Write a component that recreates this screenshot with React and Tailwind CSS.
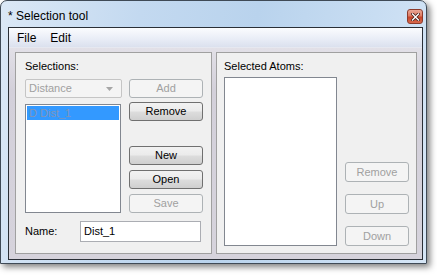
import React from 'react';

const Btn = ({ children, disabled, className = '' }) => (
  <div
    className={`flex items-center justify-center rounded-[3px] border text-[11px] leading-none ${
      disabled
        ? 'border-[#adb2b5] bg-[#f4f4f4] text-[#a0a0a0]'
        : 'border-[#707070] bg-[linear-gradient(#f2f2f2_0%,#ebebeb_48%,#dddddd_52%,#cfcfcf_100%)] text-black'
    } ${className}`}
  >
    {children}
  </div>
);

const CloseButton = () => (
  <div className="mt-[8px] flex h-[15px] w-[16px] items-center justify-center rounded-[3px] border border-[#8c3b2c] bg-[linear-gradient(#eba897_0%,#dc7a62_45%,#c7452a_55%,#d8694c_100%)]">
    <svg width="9" height="8" viewBox="0 0 9 8">
      <path d="M1.5 1 L7.5 7 M7.5 1 L1.5 7" stroke="#4a2018" strokeWidth="3" strokeLinecap="square" />
      <path d="M1.5 1 L7.5 7 M7.5 1 L1.5 7" stroke="#ffffff" strokeWidth="1.4" strokeLinecap="square" />
    </svg>
  </div>
);

export default function App() {
  return (
    <div className="relative h-[276px] w-[437px] overflow-hidden bg-white font-['Liberation_Sans',Arial,sans-serif]">
      <div className="flex h-[264px] w-[427px] flex-col rounded-t-[7px] border border-[#3f4a56] bg-[linear-gradient(100deg,#dbe8f6_0%,#c3d9f0_30%,#b9d3ed_55%,#c8ddf2_80%,#d6e6f6_100%)] pr-[3px] pb-[3px] pl-[7px] shadow-[3px_3px_6px_rgba(0,0,0,0.5)]">
        {/* title bar */}
        <div className="flex h-[26px] items-start justify-between">
          <div className="pt-[8px] text-[12px] leading-[14px] text-black">* Selection tool</div>
          <CloseButton />
        </div>

        {/* client area */}
        <div className="flex flex-1 flex-col border border-[#2a2f36] bg-[#d5d2db]">
          <div className="flex h-[20px] items-center gap-[14px] border-b border-[#e6e8f0] bg-[linear-gradient(#fbfcfe,#e8ecf6_60%,#dbe1ee)] pl-[8px] text-[12px] text-black">
            <span>File</span>
            <span>Edit</span>
          </div>

          <div className="flex flex-1 gap-[4px] pt-[4px] pr-[5px] pb-[5px] pl-[6px] bg-[linear-gradient(#e2e0e7,#d3d0da_20%,#d6d3dc)]">
            {/* left panel */}
            <div className="flex w-[197px] flex-col border border-[#a0a0a0] bg-[#f0f0f0] pt-[7px] pl-[9px] text-[11px]">
              <div className="leading-[13px] text-black">Selections:</div>
              <div className="mt-[6px] flex gap-[7px]">
                <div className="flex w-[97px] flex-col">
                  <div className="flex h-[19px] items-center justify-between rounded-[2px] border border-[#c5c5c5] bg-[#f4f4f4] pr-[8px] pl-[3px] text-[#a0a0a0]">
                    <span>Distance</span>
                    <svg width="7" height="4" viewBox="0 0 7 4">
                      <path d="M0 0 H7 L3.5 4 Z" fill="#a6a6a6" />
                    </svg>
                  </div>
                  <div className="mt-[6px] h-[109px] w-[96px] border border-[#828790] bg-white p-[1px]">
                    <div className="flex h-[14px] items-center bg-[#3399ff] pl-[2px] leading-none text-[#8095b8]">
                      D Dist_1
                    </div>
                  </div>
                </div>
                <div className="flex w-[74px] flex-col">
                  <Btn disabled className="h-[19px]">Add</Btn>
                  <Btn className="mt-[4px] h-[19px]">Remove</Btn>
                  <Btn className="mt-[25px] h-[19px]">New</Btn>
                  <Btn className="mt-[5px] h-[19px]">Open</Btn>
                  <Btn disabled className="mt-[5px] h-[19px]">Save</Btn>
                </div>
              </div>
              <div className="mt-[8px] flex items-center">
                <span className="w-[55px] text-black">Name:</span>
                <div className="flex h-[21px] w-[121px] items-center border border-[#abadb3] bg-white pl-[3px] text-black">
                  Dist_1
                </div>
              </div>
            </div>

            {/* right panel */}
            <div className="flex w-[201px] flex-col border border-[#a0a0a0] bg-[#f0f0f0] pt-[7px] pl-[7px] text-[11px]">
              <div className="leading-[13px] text-black">Selected Atoms:</div>
              <div className="mt-[4px] flex gap-[8px]">
                <div className="h-[169px] w-[113px] border border-[#828790] bg-white" />
                <div className="flex w-[64px] flex-col justify-end gap-[12px]">
                  <Btn disabled className="h-[20px]">Remove</Btn>
                  <Btn disabled className="h-[20px]">Up</Btn>
                  <Btn disabled className="h-[20px]">Down</Btn>
                </div>
              </div>
            </div>
          </div>
        </div>
      </div>
    </div>
  );
}
